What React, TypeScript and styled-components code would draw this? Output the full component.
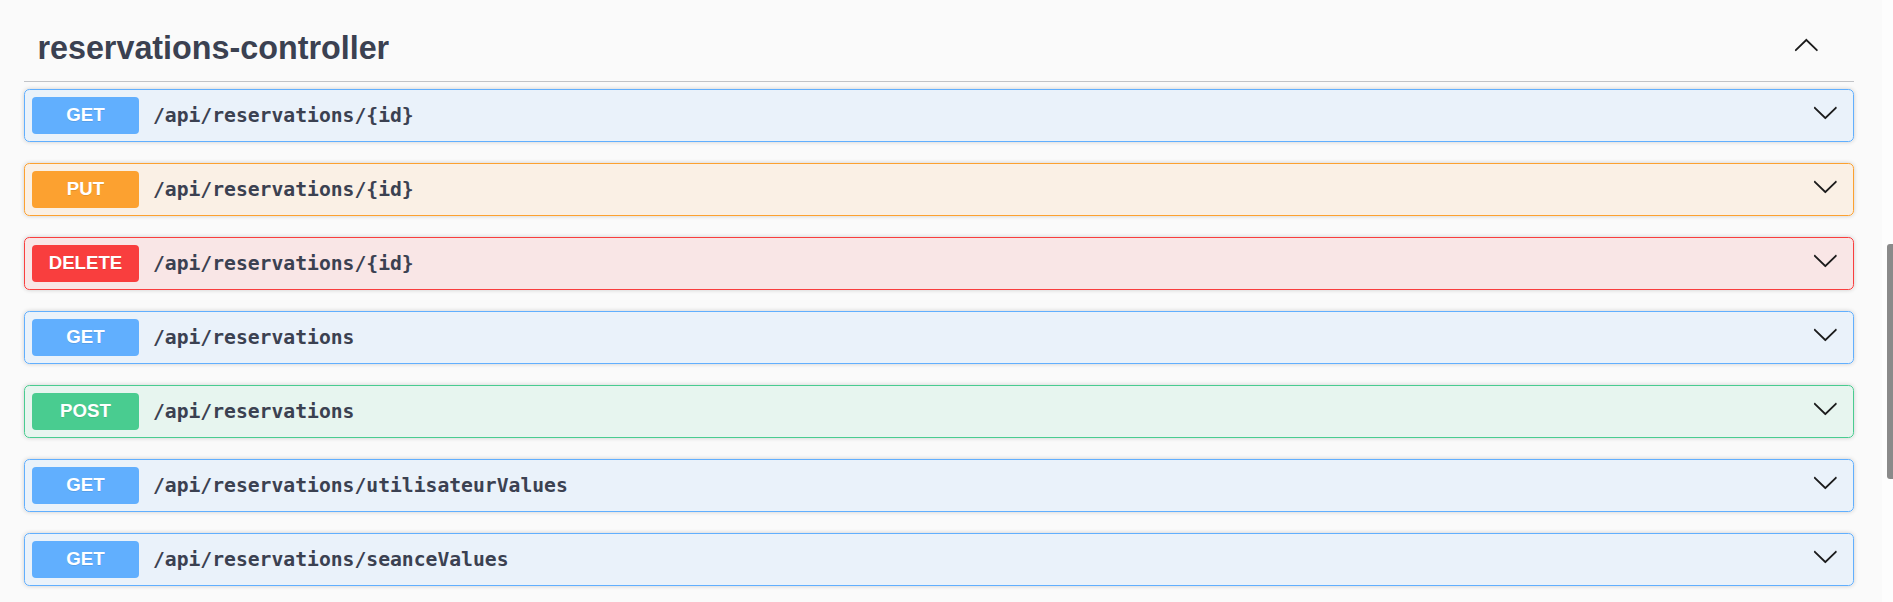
import React from "react";
import styled, { createGlobalStyle } from "styled-components";

const GlobalStyle = createGlobalStyle`
  html, body { margin: 0; padding: 0; background: #fafafa; overflow: hidden; }
  body { font-family: "Liberation Sans", Arial, sans-serif; color: #3b4151; }
`;

type Method = "GET" | "PUT" | "DELETE" | "POST";

const methodColors: Record<Method, { main: string; bg: string }> = {
  GET: { main: "#61affe", bg: "rgba(97,175,254,.1)" },
  PUT: { main: "#fca130", bg: "rgba(252,161,48,.1)" },
  DELETE: { main: "#f93e3e", bg: "rgba(249,62,62,.1)" },
  POST: { main: "#49cc90", bg: "rgba(73,204,144,.1)" },
};

const Page = styled.div`
  display: flex;
  width: 100vw;
  height: 100vh;
  background: #fafafa;
`;

const Main = styled.main`
  flex: 1;
  min-width: 0;
  padding: 15px 27.7px 0 24px;
  box-sizing: border-box;
`;

const ScrollTrack = styled.div`
  width: 11.3px;
  flex: none;
  height: 100%;
  background: #fdfdfd;
  display: flex;
  flex-direction: column;
  align-items: flex-end;
`;

const ScrollThumb = styled.div`
  width: 6px;
  height: 235px;
  margin-top: 244px;
  background: #8a8a8a;
  border-radius: 3px 0 0 3px;
`;

const TagHeader = styled.div`
  display: flex;
  align-items: center;
  justify-content: space-between;
  padding: 14.6px 34.2px 14.4px 13.4px;
  border-bottom: 1px solid #c1c3c7;
  margin-bottom: 7.2px;
`;

const TagTitle = styled.h4`
  margin: 0;
  font-family: "Liberation Sans", Arial, sans-serif;
  font-size: 32.3px;
  line-height: 37px;
  font-weight: 700;
  color: #3b4151;
`;

const ArrowButton = styled.button`
  border: none;
  background: none;
  padding: 0;
  margin: 0 0 7px;
  display: flex;
  cursor: pointer;
`;

const Block = styled.div<{ $method: Method }>`
  display: flex;
  align-items: center;
  padding: 6.67px 14.2px 6.67px 6.67px;
  margin-bottom: 21.35px;
  border: 1px solid ${(p) => methodColors[p.$method].main};
  background: ${(p) => methodColors[p.$method].bg};
  border-radius: 5.33px;
  box-shadow: 0 0 4px rgba(0, 0, 0, 0.19);
`;

const MethodBadge = styled.span<{ $method: Method }>`
  flex: none;
  min-width: 107.7px;
  height: 37.33px;
  line-height: 35.5px;
  text-align: center;
  background: ${(p) => methodColors[p.$method].main};
  color: #fff;
  border-radius: 4px;
  font-family: "Liberation Sans", Arial, sans-serif;
  font-size: 18.67px;
  font-weight: 700;
  text-shadow: 0 1px 0 rgba(0, 0, 0, 0.1);
`;

const PathText = styled.span`
  flex: 1;
  padding-left: 13.6px;
  font-family: "DejaVu Sans Mono", monospace;
  font-size: 19.7px;
  font-weight: 700;
  color: #3b4151;
`;

const ChevronBox = styled.span`
  display: flex;
  margin-bottom: 7px;
`;

const DownArrow = () => (
  <svg width="26.67" height="26.67" viewBox="0 0 20 20" aria-hidden="true">
    <path
      fill="#1b1b1b"
      d="M17.418 6.109c.272-.268.709-.268.979 0s.271.701 0 .969l-7.908 7.83c-.27.268-.707.268-.979 0l-7.908-7.830c-.27-.268-.27-.701 0-.969.271-.268.709-.268.979 0L10 13.25l7.418-7.141z"
    />
  </svg>
);

const UpArrow = () => (
  <svg width="26.67" height="26.67" viewBox="0 0 20 20" aria-hidden="true">
    <path
      fill="#1b1b1b"
      d="M17.418 14.908c.272.268.709.268.979 0s.271-.701 0-.969l-7.908-7.83c-.27-.268-.707-.268-.979 0l-7.908 7.83c-.27.268-.27.701 0 .969.271.268.709.268.979 0L10 7.751l7.418 7.157z"
    />
  </svg>
);

const ops: { method: Method; path: string }[] = [
  { method: "GET", path: "/api/reservations/{id}" },
  { method: "PUT", path: "/api/reservations/{id}" },
  { method: "DELETE", path: "/api/reservations/{id}" },
  { method: "GET", path: "/api/reservations" },
  { method: "POST", path: "/api/reservations" },
  { method: "GET", path: "/api/reservations/utilisateurValues" },
  { method: "GET", path: "/api/reservations/seanceValues" },
];

export default function App() {
  return (
    <>
      <GlobalStyle />
      <Page>
        <Main>
          <TagHeader>
            <TagTitle>reservations-controller</TagTitle>
            <ArrowButton aria-label="Collapse operation">
              <UpArrow />
            </ArrowButton>
          </TagHeader>
          {ops.map((op, i) => (
            <Block key={i} $method={op.method}>
              <MethodBadge $method={op.method}>{op.method}</MethodBadge>
              <PathText>{op.path}</PathText>
              <ChevronBox>
                <DownArrow />
              </ChevronBox>
            </Block>
          ))}
        </Main>
        <ScrollTrack>
          <ScrollThumb />
        </ScrollTrack>
      </Page>
    </>
  );
}
